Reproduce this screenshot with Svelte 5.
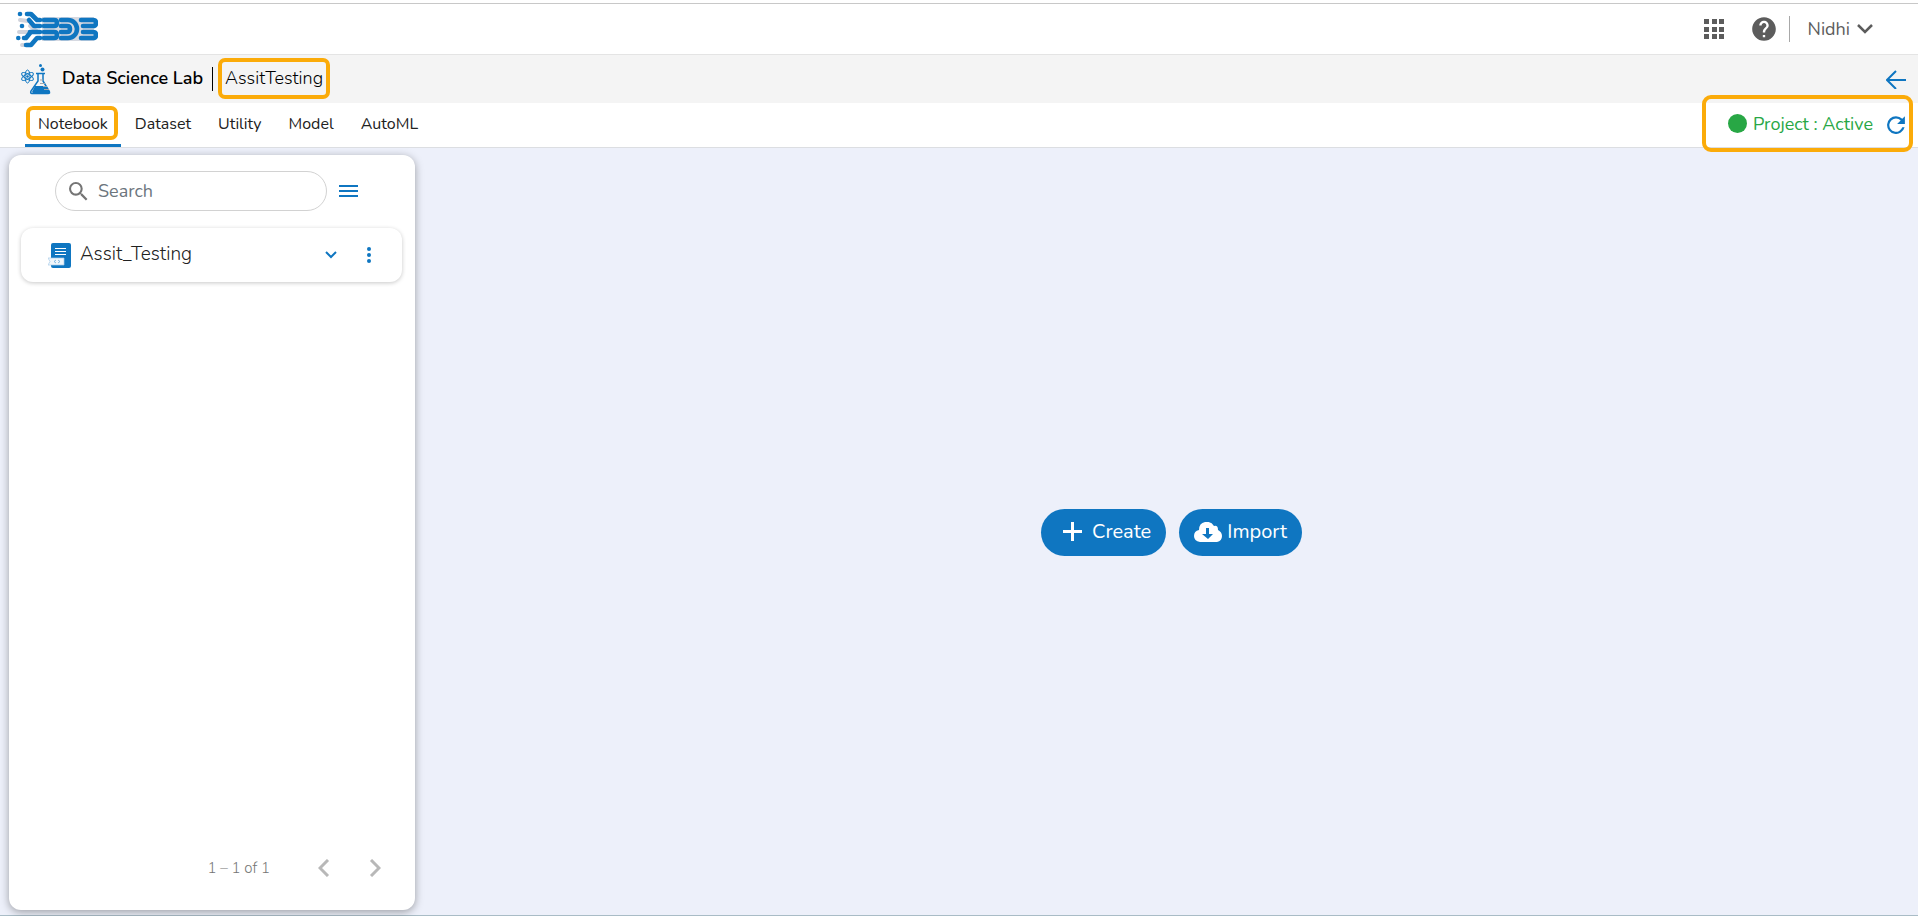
<script lang="ts">
	type Notebook = { id: number; name: string };

	const tabs = ['Notebook', 'Dataset', 'Utility', 'Model', 'AutoML'];
	const notebooks: Notebook[] = [{ id: 1, name: 'Assit_Testing' }];

	let activeTab = $state('Notebook');
	let query = $state('');
	let filtered = $derived(
		notebooks.filter((n) => n.name.toLowerCase().includes(query.toLowerCase()))
	);
</script>

<div class="app">
	<header class="topbar">
		<a class="logo" href="#home" aria-label="BDB home">
			<svg width="82" height="38" viewBox="0 0 82 38" fill="none" stroke-linecap="round" stroke-linejoin="round">
				<path d="M26 7h52v24H26z" fill="#d6d9e1" />
				<g stroke="#d0d3dc" stroke-width="4">
					<path d="M4 10l8 1M3 22h14M6 35h8M14 16l8 6" />
				</g>
				<g stroke="#0f76c1" stroke-width="4.600">
					<path d="M11 4h4l6 6h3" />
					<path d="M13 10l5 6h6" />
					<path d="M14 22h10" />
					<path d="M8 28h2l4-5" />
					<path d="M10 35h5l6-7h3" />
					<path d="M28 10h10q3 0 3 3t-3 3H28" />
					<path d="M28 22h10q3 0 3 3t-3 3H28" />
					<path d="M45 10h7a9 9 0 0 1 0 18h-7" />
					<path d="M45 16h6q3 0 3 3t-3 3h-6" />
					<path d="M65 10h12q3 0 3 3t-3 3H67" />
					<path d="M67 22h10q3 0 3 3t-3 3H65" />
				</g>
				<g fill="#0f76c1">
					<circle cx="4" cy="4" r="2.300" />
					<circle cx="6" cy="16" r="2.300" />
					<circle cx="2.300" cy="28" r="2.300" />
				</g>
			</svg>
		</a>
		<div class="topbar-right">
			<button class="icon-btn" aria-label="Apps">
				<svg width="20" height="20" viewBox="0 0 20 20" fill="#5c5c5c">
					<path d="M0 0h5v5H0zM8 0h5v5H8zM15 0h5v5h-5zM0 8h5v5H0zM8 8h5v5H8zM15 8h5v5h-5zM0 15h5v5H0zM8 15h5v5H8zM15 15h5v5h-5z" />
				</svg>
			</button>
			<button class="icon-btn help" aria-label="Help">
				<svg width="26" height="26" viewBox="1 1 22 22" fill="#5c5c5c">
					<path d="M12 2C6.480 2 2 6.480 2 12s4.480 10 10 10 10-4.480 10-10S17.520 2 12 2zm1 17h-2v-2h2v2zm2.070-7.750l-.9.920C13.450 12.900 13 13.500 13 15h-2v-.5c0-1.100.45-2.100 1.170-2.830l1.240-1.260c.37-.36.59-.86.59-1.410 0-1.100-.9-2-2-2s-2 .9-2 2H8c0-2.210 1.790-4 4-4s4 1.790 4 4c0 .88-.36 1.680-.93 2.250z" />
				</svg>
			</button>
			<span class="separator"></span>
			<button class="user">
				Nidhi
				<svg width="16" height="12" viewBox="0 0 16 12" fill="none" stroke="#5c5c5c" stroke-width="2.500">
					<path d="M1 2l7 7 7-7" />
				</svg>
			</button>
		</div>
	</header>

	<div class="titlebar">
		<svg width="32" height="32" viewBox="0 -1 32 32" fill="none" stroke="#0f76c1">
			<g stroke-width="1">
				<ellipse cx="7.500" cy="12.500" rx="6.500" ry="2.500" transform="rotate(30 7.500 12.500)" />
				<ellipse cx="7.500" cy="12.500" rx="6.500" ry="2.500" transform="rotate(-30 7.500 12.500)" />
				<ellipse cx="7.500" cy="12.500" rx="2.500" ry="6.500" />
			</g>
			<path d="M16 9.500h9M18 9.500V17l-7 10q-1 2.500 1 2.500h16q2.500 0 1-2.500l-6-10V9.500" stroke-width="1.500" />
			<path d="M15 22h11l4 6-2 2H14l-2-2z" fill="#0f76c1" stroke="none" />
			<path d="M20 16h3M20 19.500h5M23 22.500h4M24 25.500h5" stroke="#a3a7ab" />
			<g fill="#0f76c1" stroke="none">
				<circle cx="20.500" cy="1.500" r="1.500" />
				<circle cx="22.500" cy="5.500" r="2" />
				<circle cx="7.500" cy="12.500" r="1.300" />
			</g>
		</svg>
		<h1>Data Science Lab</h1>
		<span class="title-divider"></span>
		<span class="project-name">AssitTesting</span>
		<button class="icon-btn back" aria-label="Back">
			<svg width="20" height="20" viewBox="0 0 20 20" fill="none" stroke="#0f76c1" stroke-width="2">
				<path d="M20 11H2M10 2l-9 9 9 9" />
			</svg>
		</button>
	</div>

	<nav class="tabbar">
		{#each tabs as tab (tab)}
			<button class="tab" class:active={activeTab === tab} onclick={() => (activeTab = tab)}>
				{tab}
			</button>
		{/each}
		<div class="status">
			<span class="status-dot"></span>
			<span class="status-text">Project : Active</span>
			<button class="icon-btn" aria-label="Refresh status">
				<svg width="18" height="20" viewBox="4 2 16 18" fill="#0f76c1">
					<path d="M17.650 6.350A7.960 7.960 0 0 0 12 4a8 8 0 1 0 7.730 10h-2.080A6 6 0 1 1 12 6c1.660 0 3.140.69 4.220 1.780L13 11h7V4z" />
				</svg>
			</button>
		</div>
	</nav>

	<main>
		<aside>
			<div class="search-row">
				<label class="search">
					<svg width="19" height="19" viewBox="3 3 18 18" fill="#757575">
						<path d="M15.500 14h-.79l-.28-.27A6.470 6.470 0 0 0 16 9.500 6.500 6.500 0 1 0 9.500 16c1.610 0 3.090-.59 4.230-1.570l.27.28v.79l5 4.990L20.490 19l-4.990-5zm-6 0C7.010 14 5 11.990 5 9.500S7.010 5 9.500 5 14 7.010 14 9.500 11.990 14 9.500 14z" />
					</svg>
					<input type="text" placeholder="Search" aria-label="Search" bind:value={query} />
				</label>
				<button class="icon-btn" aria-label="List options">
					<svg width="19" height="14" viewBox="0 0 19 14" fill="#0f76c1">
						<path d="M0 1h19v2H0zM0 6h19v2H0zM0 11h19v2H0z" />
					</svg>
				</button>
			</div>

			<ul class="notebooks">
				{#each filtered as notebook (notebook.id)}
					<li class="notebook">
						<svg width="24" height="26" viewBox="0 0 24 26">
							<rect x="3" y="1" width="20" height="25" rx="2" fill="#0f76c1" />
							<path d="M7 6.500h11M7 9.500h11M7 12.500h11" stroke="#fff" stroke-width="1.200" />
							<path d="M0 16h16v7H0l2-3.500z" fill="#f0f6fb" stroke="#a9cde9" stroke-width=".7" />
							<path d="M8 18l-2 1.500L8 21M10 18l2 1.500-2 1.500" fill="none" stroke="#6aabda" stroke-width=".8" />
						</svg>
						<span class="notebook-name">{notebook.name}</span>
						<button class="icon-btn" aria-label="Expand {notebook.name}">
							<svg width="12" height="8" viewBox="0 0 12 8" fill="none" stroke="#0f76c1" stroke-width="2">
								<path d="M1 1l5 5 5-5" />
							</svg>
						</button>
						<button class="icon-btn more" aria-label="More options">
							<svg width="4" height="18" viewBox="0 0 4 18" fill="#0f76c1">
								<circle cx="2" cy="3" r="2" />
								<circle cx="2" cy="9" r="2" />
								<circle cx="2" cy="15" r="2" />
							</svg>
						</button>
					</li>
				{/each}
			</ul>

			<div class="paginator">
				<span>1 – 1 of 1</span>
				<button class="icon-btn page" aria-label="Previous page">
					<svg width="12" height="18" viewBox="0 0 12 18" fill="none" stroke="#b8b8b8" stroke-width="3">
						<path d="M10 1L2 9l8 8" />
					</svg>
				</button>
				<button class="icon-btn page" aria-label="Next page">
					<svg width="12" height="18" viewBox="0 0 12 18" fill="none" stroke="#b8b8b8" stroke-width="3">
						<path d="M2 1l8 8-8 8" />
					</svg>
				</button>
			</div>
		</aside>

		<section class="actions">
			<button class="action create">
				<svg width="19" height="19" viewBox="0 0 19 19" fill="#fff">
					<path d="M8 0h3v8h8v3h-8v8H8v-8H0V8h8z" />
				</svg>
				Create
			</button>
			<button class="action import">
				<svg width="28" height="20" viewBox="0 0 28 20">
					<path d="M6 20q-6-1-6-6t5-6Q5 1 11 0t9 4q4-1 4 4 4 2 4 6 0 5-5 6z" fill="#fff" />
					<path d="M12 6h3v6h4l-5 5-6-5h4z" fill="#0f76c1" />
				</svg>
				Import
			</button>
		</section>
	</main>
</div>

<style>
	:global(body) {
		margin: 0;
	}

	.app {
		--blue: #0f76c1;
		--highlight: #fbab09;
		box-sizing: border-box;
		min-height: 100vh;
		display: flex;
		flex-direction: column;
		padding-top: 3px;
		border-bottom: 1px solid #a9bcc6;
		background: #fff;
		color: #212121;
		font-family: Nunito, Lato, 'Open Sans', sans-serif;
		font-size: 18px;
	}

	button {
		border: none;
		background: none;
		padding: 0;
		font: inherit;
		color: inherit;
		cursor: pointer;
	}

	svg {
		display: block;
		flex-shrink: 0;
	}

	.icon-btn {
		display: flex;
		align-items: center;
		justify-content: center;
	}

	.topbar {
		display: flex;
		align-items: center;
		justify-content: space-between;
		height: 50px;
		padding: 0 45px 0 16px;
		border-top: 1px solid #c8c8c8;
		border-bottom: 1px solid #e4e4e4;
	}

	.topbar-right {
		display: flex;
		align-items: center;
	}

	.help {
		margin: 0 12px 0 27px;
	}

	.separator {
		width: 1px;
		height: 26px;
		background: #a8a8a8;
	}

	.user {
		display: flex;
		align-items: center;
		gap: 7px;
		margin-left: 18px;
		color: #5c5c5c;
	}

	.titlebar {
		display: flex;
		align-items: center;
		height: 48px;
		padding: 0 12px 0 20px;
		background: #f4f4f4;
		color: #000;
	}

	h1 {
		margin: 0 9px 0 10px;
		padding-bottom: 2px;
		font-size: 18px;
		font-weight: 600;
	}

	.title-divider {
		width: 1px;
		height: 24px;
		margin-right: 5px;
		background: #000;
	}

	.project-name {
		margin-bottom: 2px;
		padding: 4px 3px 5px;
		border: 4px solid var(--highlight);
		border-radius: 7px;
		font-weight: 300;
		line-height: 24px;
	}

	.back {
		margin-left: auto;
	}

	.tabbar {
		position: relative;
		display: flex;
		gap: 1px;
		height: 44px;
		padding-left: 25px;
		border-bottom: 1px solid #dcdee2;
		font-size: 16px;
	}

	.tab {
		position: relative;
		padding: 0 13px;
		border-bottom: 3px solid transparent;
	}

	.tab.active {
		border-bottom-color: var(--blue);
	}

	.tab.active::after {
		content: '';
		position: absolute;
		inset: 3px 3px 4px 1px;
		border: 4px solid var(--highlight);
		border-radius: 7px;
	}

	.status {
		position: absolute;
		top: -8px;
		right: 5px;
		display: flex;
		align-items: center;
		height: 49px;
		padding: 0 4px 0 22px;
		border: 4px solid var(--highlight);
		border-radius: 9px;
		color: #28a745;
		font-size: 18px;
	}

	.status-dot {
		width: 19px;
		height: 19px;
		margin-right: 6px;
		border-radius: 50%;
		background: #28a745;
	}

	.status-text {
		margin-right: 14px;
	}

	main {
		flex: 1;
		display: flex;
		padding: 7px 0 5px 9px;
		background: #edf0fa;
	}

	aside {
		box-sizing: border-box;
		display: flex;
		flex-direction: column;
		width: 406px;
		padding: 16px 13px 24px 12px;
		border-radius: 12px;
		background: #fff;
		box-shadow: 0 2px 8px rgba(0, 0, 0, 0.35);
	}

	.search-row {
		display: flex;
		align-items: center;
		gap: 12px;
		padding-left: 34px;
	}

	.search {
		box-sizing: border-box;
		display: flex;
		align-items: center;
		gap: 10px;
		width: 272px;
		height: 40px;
		padding: 0 13px;
		border: 1px solid #d2d2d2;
		border-radius: 20px;
	}

	input {
		flex: 1;
		min-width: 0;
		padding: 0;
		border: none;
		outline: none;
		background: none;
		font: inherit;
	}

	input::placeholder {
		color: #6c757d;
		opacity: 1;
	}

	.notebooks {
		flex: 1;
		margin: 17px 0 0;
		padding: 0;
		list-style: none;
	}

	.notebook {
		display: flex;
		align-items: center;
		height: 54px;
		padding: 0 31px 0 27px;
		border-radius: 12px;
		box-shadow: 0 1px 4px rgba(0, 0, 0, 0.22);
	}

	.notebook-name {
		flex: 1;
		margin-left: 8px;
		padding-bottom: 2px;
		font-size: 19px;
		font-weight: 300;
	}

	.more {
		margin-left: 30px;
	}

	.paginator {
		display: flex;
		align-items: center;
		justify-content: flex-end;
		padding-right: 2px;
		color: #757575;
		font-size: 15px;
		font-weight: 300;
	}

	.paginator span {
		margin-right: 28px;
	}

	.page {
		width: 51px;
		height: 36px;
	}

	.actions {
		flex: 1;
		display: flex;
		align-items: center;
		justify-content: center;
		gap: 13px;
		padding-left: 10px;
	}

	.action {
		display: flex;
		align-items: center;
		height: 47px;
		padding: 0 15px 2px;
		box-sizing: border-box;
		border-radius: 24px;
		background: var(--blue);
		color: #fff;
		font-size: 20px;
	}

	.create {
		gap: 10px;
		padding-left: 22px;
	}

	.import {
		gap: 5px;
	}
</style>
